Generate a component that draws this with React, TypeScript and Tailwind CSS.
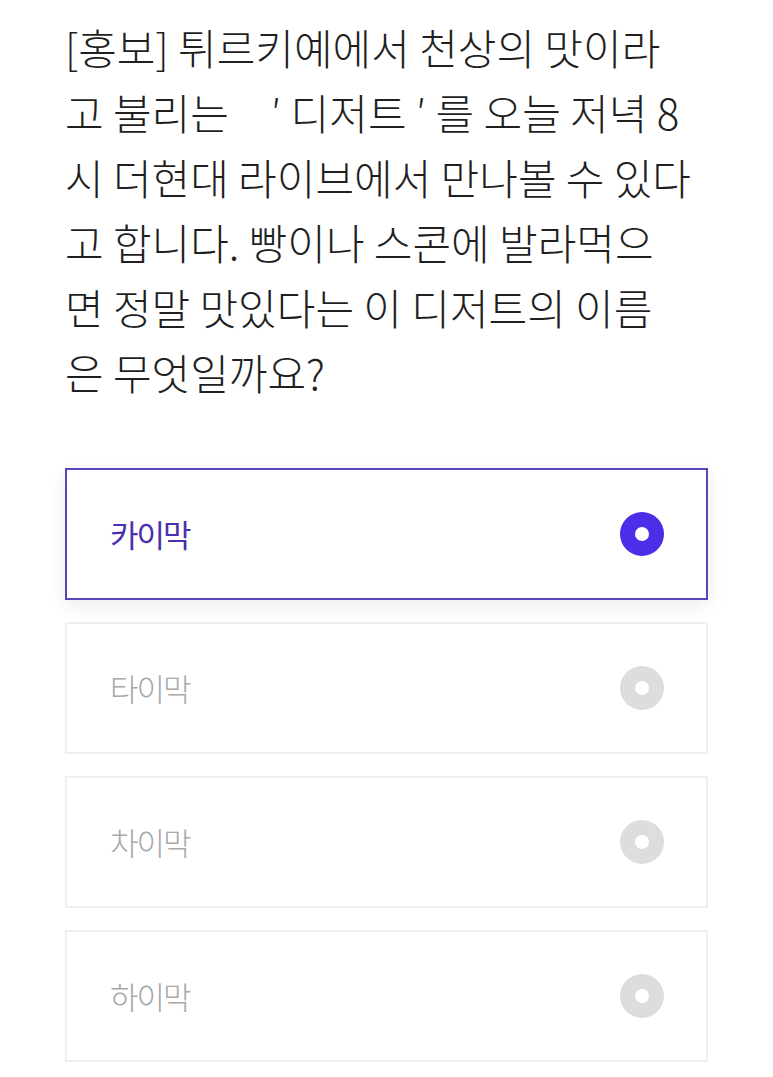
import React, { useState } from "react";

const lines = [
  "[홍보] 튀르키예에서 천상의 맛이라",
  "고 불리는　′ 디저트 ′ 를 오늘 저녁 8",
  "시 더현대 라이브에서 만나볼 수 있다",
  "고 합니다. 빵이나 스콘에 발라먹으",
  "면 정말 맛있다는 이 디저트의 이름",
  "은 무엇일까요?",
];

const options = ["카이막", "타이막", "차이막", "하이막"];

const App: React.FC = () => {
  const [selected, setSelected] = useState(0);

  return (
    <div
      className="min-h-screen bg-white px-[65px] pt-[14px] pb-[14px]"
      style={{ fontFamily: '"Noto Sans CJK KR", "Noto Sans", sans-serif' }}
    >
      <p className="text-[42px] leading-[65px] tracking-[0px] font-light text-[#1f1f1f]">
        {lines.map((line, i) => (
          <span key={i} className="block whitespace-pre">
            {line}
          </span>
        ))}
      </p>

      <div className="mt-[64px] flex flex-col gap-[22px]">
        {options.map((opt, i) => {
          const active = selected === i;
          return (
            <button
              key={opt}
              type="button"
              onClick={() => setSelected(i)}
              className={`flex h-[132px] w-full items-center justify-between border-2 bg-white pl-[43px] pr-[42px] text-left ${
                active
                  ? "border-[#5a44b8] shadow-[0_6px_18px_rgba(0,0,0,0.08)]"
                  : "border-[#efefef]"
              }`}
            >
              <span
                className={`text-[31px] tracking-[-2px] ${
                  active ? "font-normal text-[#4a2fae]" : "font-light text-[#a8a8a8]"
                }`}
              >
                {opt}
              </span>
              <span
                className={`flex h-[44px] w-[44px] items-center justify-center rounded-full ${
                  active ? "bg-[#4b2ee8]" : "bg-[#dddddd]"
                }`}
              >
                <span className="h-[14px] w-[14px] rounded-full bg-white" />
              </span>
            </button>
          );
        })}
      </div>
    </div>
  );
};

export default App;
